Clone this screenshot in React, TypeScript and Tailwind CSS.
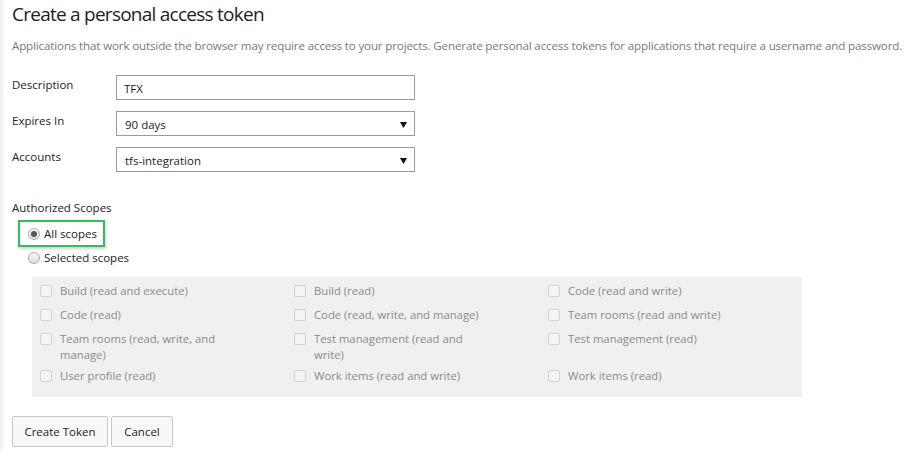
import React from "react";

const scopes: string[][] = [
  ["Build (read and execute)", "Build (read)", "Code (read and write)"],
  ["Code (read)", "Code (read, write, and manage)", "Team rooms (read and write)"],
  ["Team rooms (read, write, and manage)", "Test management (read and write)", "Test management (read)"],
  ["User profile (read)", "Work items (read and write)", "Work items (read)"],
];

function Radio({ checked }: { checked?: boolean }) {
  return (
    <span className="w-[12px] h-[12px] rounded-full border border-[#adadad] bg-gradient-to-b from-[#f4f4f4] to-[#dedede] flex items-center justify-center shrink-0">
      {checked && <span className="w-[6px] h-[6px] rounded-full bg-[#555]" />}
    </span>
  );
}

function Box() {
  return <span className="w-[12px] h-[12px] rounded-[2px] border border-[#d2d2d2] bg-[#f4f4f4] shrink-0 mt-[2px]" />;
}

function Arrow() {
  return (
    <svg width="7" height="7" viewBox="0 0 7 7" className="shrink-0">
      <path d="M0 1 L7 1 L3.5 7 Z" fill="#111" />
    </svg>
  );
}

export default function App() {
  return (
    <div
      className="w-[912px] h-[451px] bg-white border-l-[3px] border-[#f2f2f2] pl-[9px] text-[#222] overflow-hidden"
      style={{ fontFamily: '"Open Sans", "Noto Sans", Arial, sans-serif' }}
    >
      <h1 className="text-[19px] leading-[24px] pt-[2px] text-[#1e1e1e] font-normal tracking-[-0.75px]">
        Create a personal access token
      </h1>
      <p className="mt-[12px] text-[11.6px] leading-[16px] text-[#7a7a7a] whitespace-nowrap tracking-[-0.15px]">
        Applications that work outside the browser may require access to your projects. Generate personal access tokens for applications that require a username and password.
      </p>

      <div className="mt-[21px] flex flex-col gap-[11px] text-[11.5px]">
        <div className="flex">
          <div className="w-[104px] pt-[2px] leading-[16px]">Description</div>
          <div className="w-[299px] h-[25px] border border-[#9a9a9a] flex items-center px-[7px] pt-[2px]">TFX</div>
        </div>
        <div className="flex">
          <div className="w-[104px] pt-[2px] leading-[16px]">Expires In</div>
          <div className="w-[299px] h-[25px] border border-[#9a9a9a] flex items-center justify-between pl-[8px] pr-[7px] pt-[2px]">
            <span>90 days</span>
            <Arrow />
          </div>
        </div>
        <div className="flex">
          <div className="w-[104px] pt-[2px] leading-[16px]">Accounts</div>
          <div className="w-[299px] h-[25px] border border-[#9a9a9a] flex items-center justify-between pl-[8px] pr-[7px] pt-[2px]">
            <span>tfs-integration</span>
            <Arrow />
          </div>
        </div>
      </div>

      <div className="mt-[28px] text-[11.5px] leading-[16px]">Authorized Scopes</div>

      <div className="mt-[4px] ml-[6px] w-[87px] h-[27px] border-2 border-[#2fbf5c] shadow-[1px_2px_3px_rgba(0,0,0,0.18)] flex items-center gap-[4px] pl-[8px] text-[11.5px]">
        <Radio checked />
        <span className="leading-[16px]">All scopes</span>
      </div>
      <div className="ml-[16px] mt-[3px] flex items-center gap-[4px] text-[11.5px]">
        <Radio />
        <span className="leading-[16px]">Selected scopes</span>
      </div>

      <div className="mt-[11px] ml-[20px] w-[770px] h-[120px] bg-[#f0f0f0] pl-[8px] pt-[6px] grid grid-cols-3 gap-y-[8px] content-start text-[11.3px] text-[#8a8a8a]">
        {scopes.flat().map((s, i) => (
          <div key={i} className={`flex gap-[8px] ${i >= 9 ? "-mt-[3px]" : ""}`}>
            <Box />
            <span className="leading-[16px] max-w-[172px]">{s}</span>
          </div>
        ))}
      </div>

      <div className="mt-[19px] flex gap-[3px] text-[11.5px]">
        <button className="w-[96px] h-[31px] border border-[#c8c8c8] rounded-[2px] bg-[#f8f8f8] text-[#222]">
          Create Token
        </button>
        <button className="w-[62px] h-[31px] border border-[#c8c8c8] rounded-[2px] bg-[#f8f8f8] text-[#222]">
          Cancel
        </button>
      </div>
    </div>
  );
}
